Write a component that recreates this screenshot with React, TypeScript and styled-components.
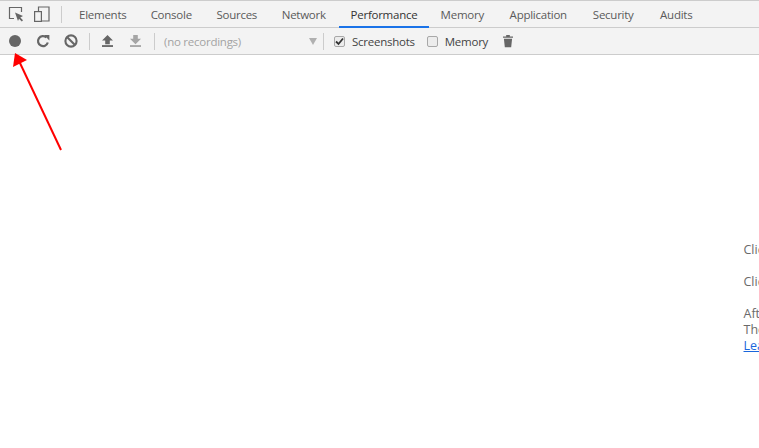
import React from "react";
import styled, { createGlobalStyle } from "styled-components";

const Global = createGlobalStyle`
  html, body { margin: 0; padding: 0; width: 759px; height: 448px; overflow: hidden; background: #fff; }
  body { font-family: "Open Sans", "Noto Sans", sans-serif; font-size: 11.5px; letter-spacing: -0.25px; }
`;
const Page = styled.div`
  position: relative;
  width: 759px;
  height: 448px;
  overflow: hidden;
  display: flex;
  flex-direction: column;
`;
const Bar = styled.div<{ $h: number }>`
  flex: none;
  height: ${(p) => p.$h}px;
  display: flex;
  align-items: center;
  background: #f3f3f3;
  border-bottom: 1px solid #ccc;
`;
const TabBar = styled(Bar)`
  border-top: 1px solid #ccc;
  align-items: stretch;
`;
const ToolBar = styled(Bar)`
  padding-left: 1px;
`;
const IconSlot = styled.div<{ $w: number; $off?: boolean; $ml?: number }>`
  flex: none;
  width: ${(p) => p.$w}px;
  margin-left: ${(p) => p.$ml ?? 0}px;
  display: flex;
  align-items: center;
  justify-content: center;
  opacity: ${(p) => (p.$off ? 0.55 : 1)};
`;
const Sep = styled.div<{ $l: number; $r: number }>`
  flex: none;
  width: 1px;
  height: 17px;
  align-self: center;
  background: #ccc;
  margin: 0 ${(p) => p.$r}px 0 ${(p) => p.$l}px;
`;
const Tab = styled.div<{ $active?: boolean; $w: number }>`
  flex: none;
  width: ${(p) => p.$w}px;
  box-sizing: border-box;
  display: flex;
  align-items: center;
  justify-content: center;
  white-space: nowrap;
  color: ${(p) => (p.$active ? "#333" : "#5a5a5a")};
  border-bottom: 2px solid ${(p) => (p.$active ? "#1a73e8" : "transparent")};
  margin-bottom: -1px;
  padding: 2px ${(p) => (p.$active ? 0 : 1.5)}px 0 0;
`;
const Select = styled.div`
  flex: none;
  width: 168px;
  box-sizing: border-box;
  padding: 0 6px 0 9px;
  display: flex;
  align-items: center;
  justify-content: space-between;
  color: #a3a3a3;
`;
const Caret = styled.span`
  width: 0;
  height: 0;
  border-left: 4px solid transparent;
  border-right: 4px solid transparent;
  border-top: 7px solid #b0b0b0;
`;
const Check = styled.label<{ $l: number }>`
  flex: none;
  display: flex;
  align-items: center;
  gap: 7px;
  margin-left: ${(p) => p.$l}px;
  color: #444;
`;
const Box = styled.span`
  box-sizing: border-box;
  width: 11px;
  height: 11px;
  display: flex;
  align-items: center;
  justify-content: center;
  background: #ececec;
  border: 1px solid #a8a8a8;
  border-radius: 2px;
`;
const Landing = styled.main`
  flex: 1;
  padding: 187px 0 0 743.5px;
  background: #fff;
  color: #6a6a6a;
  white-space: nowrap;
  font-size: 12.5px;
  letter-spacing: 0;
  line-height: 16px;
`;
const Para = styled.p`
  margin: 0 0 16px;
`;
const More = styled.a`
  color: #1a66dc;
  text-decoration: underline;
`;
const Arrow = styled.svg`
  position: absolute;
  left: 0;
  top: 0;
  pointer-events: none;
`;

const G = "#666666";
const tabs: [string, number][] = [
  ["Elements", 71], ["Console", 66], ["Sources", 65], ["Network", 69],
  ["Performance", 90], ["Memory", 68], ["Application", 84], ["Security", 66], ["Audits", 60],
];

export default function App() {
  return (
    <Page>
      <Global />
      <TabBar $h={26}>
        <IconSlot $w={32}>
          <svg width="16" height="16" viewBox="0 0 16 16" fill="none">
            <path d="M6 12.5H1.5V1.5H13.5V6" stroke={G} strokeWidth="1.2" />
            <path d="M7 6.5L15 10L12.3 11.5L15 14.3L13.8 15.5L11 12.7L10 15Z" fill={G} />
          </svg>
        </IconSlot>
        <IconSlot $w={20}>
          <svg width="16" height="16" viewBox="0 0 16 16" fill="none" stroke={G} strokeWidth="1.2">
            <path d="M4.5 5V1H15V15H8" />
            <rect x="0.6" y="5.6" width="6.8" height="9.8" />
          </svg>
        </IconSlot>
        <Sep $l={9} $r={6} />
        {tabs.map(([t, w]) => (
          <Tab key={t} $w={w} $active={t === "Performance"}>{t}</Tab>
        ))}
      </TabBar>
      <ToolBar $h={26}>
        <IconSlot $w={28}>
          <svg width="12" height="12" viewBox="0 0 12 12"><circle cx="6" cy="6" r="6" fill={G} /></svg>
        </IconSlot>
        <IconSlot $w={28}>
          <svg width="14" height="14" viewBox="0 0 14 14" fill="none">
            <path d="M11.8 8.5A5 5 0 1 1 10.4 3.4" stroke={G} strokeWidth="2.2" />
            <path d="M8 1H13.4V6.4Z" fill={G} />
          </svg>
        </IconSlot>
        <IconSlot $w={28}>
          <svg width="14" height="14" viewBox="0 0 14 14" fill="none" stroke={G} strokeWidth="2.1">
            <circle cx="7" cy="7" r="5.6" />
            <path d="M3 3L11 11" />
          </svg>
        </IconSlot>
        <Sep $l={4} $r={4} />
        <IconSlot $w={27}>
          <svg width="11" height="12" viewBox="0 0 12 13" fill={G}>
            <path d="M6 0L12 6H8.5V10H3.5V6H0Z" /><rect y="11" width="12" height="2" />
          </svg>
        </IconSlot>
        <IconSlot $w={29} $off>
          <svg width="11" height="12" viewBox="0 0 12 13" fill={G}>
            <path d="M3.5 0H8.5V4H12L6 10L0 4H3.5Z" /><rect y="11" width="12" height="2" />
          </svg>
        </IconSlot>
        <Sep $l={4} $r={0} />
        <Select>
          <span>(no recordings)</span>
          <Caret />
        </Select>
        <Sep $l={0} $r={0} />
        <Check $l={10}>
          <Box>
            <svg width="9" height="9" viewBox="0 0 9 9" fill="none" stroke="#333" strokeWidth="1.8">
              <path d="M1 4.5L3.5 7L8 1.5" />
            </svg>
          </Box>
          Screenshots
        </Check>
        <Check $l={12}><Box />Memory</Check>
        <IconSlot $w={28} $ml={6}>
          <svg width="10" height="14" viewBox="0 0 11 14" fill={G}>
            <path d="M0 2H3.5V0.5H7.5V2H11V3.5H0ZM1 4.5H10L9 14H2Z" />
          </svg>
        </IconSlot>
      </ToolBar>
      <Landing>
        <Para>Click the record button or hit Ctrl + E to start a new recording.</Para>
        <Para>Click the reload button or hit Ctrl + Shift + E to record the page load.</Para>
        <div>After recording, select an area of interest in the overview by dragging.</div>
        <div>Then, zoom and pan the timeline with the mousewheel or WASD keys.</div>
        <More href="#">Learn more</More>
      </Landing>
      <Arrow width="759" height="448" viewBox="0 0 759 448">
        <path d="M61 150L19.5 62" stroke="#ff0000" strokeWidth="2" />
        <path d="M15 53L13 67L27 60Z" fill="#ff0000" />
      </Arrow>
    </Page>
  );
}
